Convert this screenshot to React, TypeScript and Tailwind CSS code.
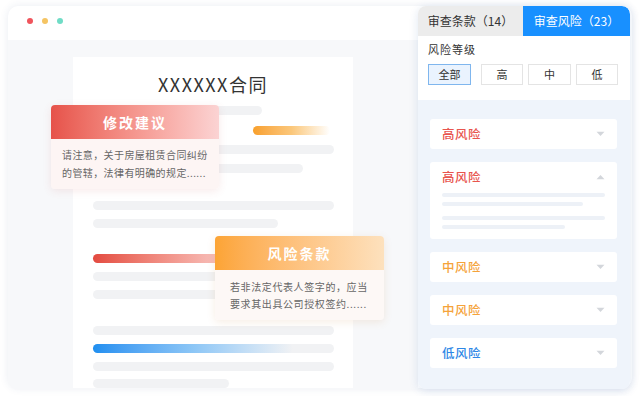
import React from "react";

type Line = { mt: number; w?: number; kind?: "gray" | "orange" | "red" | "blue"; ml?: number };

const lines: Line[] = [
  { mt: 11, w: 169 },
  { mt: 11, w: 77, ml: 160, kind: "orange" },
  { mt: 10 },
  { mt: 10, w: 210 },
  { mt: 28 },
  { mt: 9, w: 185 },
  { mt: 26, w: 160, kind: "red" },
  { mt: 9 },
  { mt: 9 },
  { mt: 27 },
  { mt: 9, kind: "blue" },
  { mt: 9 },
  { mt: 8, w: 136 },
];

function DocLine({ line }: { line: Line }) {
  const style = { marginTop: line.mt, marginLeft: line.ml ?? 0, width: line.w ?? 241 };
  if (line.kind === "orange")
    return <div style={style} className="h-[9px] shrink-0 rounded-full bg-gradient-to-r from-[#f8a02a] via-[#fbc77a] to-white/0" />;
  if (line.kind === "red")
    return <div style={style} className="h-[9px] shrink-0 rounded-full bg-gradient-to-r from-[#e34a40] to-[#f7dcdc]" />;
  if (line.kind === "blue")
    return (
      <div style={style} className="h-[9px] shrink-0 rounded-full bg-[#f1f2f4]">
        <div className="h-full w-[200px] rounded-full bg-gradient-to-r from-[#1e8ff0] via-[#8cc6f6] to-[#f1f2f4]" />
      </div>
    );
  return <div style={style} className="h-[9px] shrink-0 rounded-full bg-[#f1f2f4]" />;
}

function Chevron({ up }: { up?: boolean }) {
  return (
    <svg width="9" height="6" viewBox="0 0 9 6" className={up ? "rotate-180" : ""}>
      <path d="M0.5 0.8 L4.5 5 L8.5 0.8 Z" fill="#d3d6db" />
    </svg>
  );
}

function RiskCard({ label, color, open }: { label: string; color: string; open?: boolean }) {
  return (
    <div className="rounded-[3px] bg-white px-[12px]">
      <div className="flex h-[30px] items-center justify-between">
        <span className={`text-[12.5px] font-medium tracking-[0.5px] ${color}`}>{label}</span>
        <Chevron up={open} />
      </div>
      {open && (
        <div className="pb-[10px] pt-[1px]">
          <div className="h-[4px] w-[163px] rounded-full bg-[#edf1f7]" />
          <div className="mt-[5px] h-[4px] w-[141px] rounded-full bg-[#edf1f7]" />
          <div className="mt-[10px] h-[4px] w-[163px] rounded-full bg-[#edf1f7]" />
          <div className="mt-[5px] h-[4px] w-[123px] rounded-full bg-[#edf1f7]" />
        </div>
      )}
    </div>
  );
}

export default function App() {
  return (
    <div className="h-[396px] w-[640px] bg-white pb-[8px] pl-[8px] pr-[8px] pt-[6px] font-['Noto_Sans_CJK_SC',sans-serif]">
      <div className="flex h-full rounded-[10px] bg-white shadow-[0_0_8px_rgba(40,70,130,0.10)]">
        {/* Document side */}
        <div className="flex w-[410px] flex-col">
          <div className="flex h-[34px] shrink-0 gap-[9px] pl-[19px] pt-[12px]">
            <span className="h-[6px] w-[6px] rounded-full bg-[#f0545c]" />
            <span className="h-[6px] w-[6px] rounded-full bg-[#f5c463]" />
            <span className="h-[6px] w-[6px] rounded-full bg-[#70dcc6]" />
          </div>
          <div className="flex flex-1 flex-col items-center rounded-bl-[10px] bg-[#f7f8fa] pt-[17px]">
            <div className="relative mb-[2px] flex w-[280px] flex-1 flex-col bg-white px-[20px] pt-[16px]">
              <div className="text-center text-[18px] leading-[22px] tracking-[1.5px] text-[#333]">XXXXXX合同</div>
              {lines.map((l, i) => (
                <DocLine key={i} line={l} />
              ))}
              <div className="absolute left-[-22px] top-[48px] w-[168px] overflow-hidden rounded-[4px] shadow-[0_2px_8px_rgba(200,80,80,0.12)]">
                <div className="flex h-[34px] items-center justify-center bg-gradient-to-r from-[#e6524a] to-[#fbd3d3] text-[14px] font-bold tracking-[2px] text-white">
                  修改建议
                </div>
                <div className="h-[50px] whitespace-nowrap bg-[#fdf5f4] pl-[11px] pt-[7px] text-[10px] leading-[18px] tracking-[0.4px] text-[#666]">
                  请注意，关于房屋租赁合同纠纷
                  <br />
                  的管辖，法律有明确的规定......
                </div>
              </div>
              <div className="absolute left-[142px] top-[179px] w-[169px] overflow-hidden rounded-[4px] shadow-[0_2px_8px_rgba(200,130,60,0.14)]">
                <div className="flex h-[34px] items-center justify-center bg-gradient-to-r from-[#fca434] to-[#fde1bd] text-[14px] font-bold tracking-[2px] text-white">
                  风险条款
                </div>
                <div className="h-[50px] whitespace-nowrap bg-[#fdf8f6] pl-[15px] pt-[8px] text-[10px] leading-[17px] tracking-[0.6px] text-[#666]">
                  若非法定代表人签字的，应当
                  <br />
                  要求其出具公司授权签约......
                </div>
              </div>
            </div>
          </div>
        </div>

        {/* Review panel */}
        <div className="mb-[-1px] mr-[2px] flex w-[212px] flex-col overflow-hidden rounded-[8px] shadow-[0_2px_10px_rgba(30,80,160,0.14)]">
          <div className="flex h-[30px] shrink-0 text-[12px]">
            <div className="flex w-[105px] items-center justify-center bg-[#ececec] text-[#333]">审查条款（14）</div>
            <div className="flex flex-1 items-center justify-center rounded-tr-[8px] bg-[#1890ff] text-white">审查风险（23）</div>
          </div>
          <div className="h-[64px] shrink-0 bg-white px-[10px] pt-[5px]">
            <div className="text-[11px] leading-[16px] tracking-[1px] text-[#333]">风险等级</div>
            <div className="mt-[7px] flex text-[11px] text-[#333]">
              <div className="flex h-[21px] w-[43px] items-center justify-center border border-[#7fb6ee] bg-[#eaf3fe]">全部</div>
              <div className="ml-[10px] flex h-[21px] w-[42px] items-center justify-center border border-[#e4e4e4]">高</div>
              <div className="ml-[5px] flex h-[21px] w-[43px] items-center justify-center border border-[#e4e4e4]">中</div>
              <div className="ml-[5px] flex h-[21px] w-[42px] items-center justify-center border border-[#e4e4e4]">低</div>
            </div>
          </div>
          <div className="flex flex-1 flex-col gap-[13px] bg-[#eff4fb] pl-[12px] pr-[13px] pt-[19px]">
            <RiskCard label="高风险" color="text-[#e8554e]" />
            <RiskCard label="高风险" color="text-[#e8554e]" open />
            <RiskCard label="中风险" color="text-[#f5a33a]" />
            <RiskCard label="中风险" color="text-[#f5a33a]" />
            <RiskCard label="低风险" color="text-[#2d87e6]" />
          </div>
        </div>
      </div>
    </div>
  );
}
